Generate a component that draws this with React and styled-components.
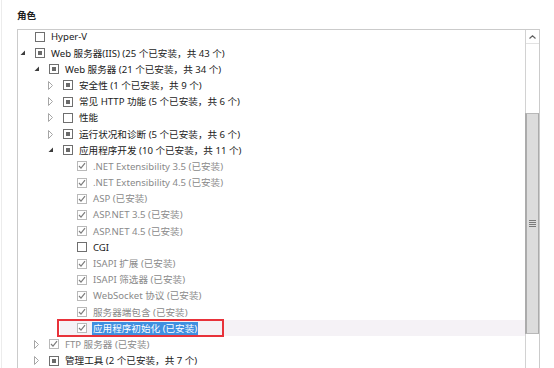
import React from "react";
import styled, { createGlobalStyle } from "styled-components";

const Global = createGlobalStyle`
  html, body { margin: 0; padding: 0; background: #fff; overflow: hidden; }
  body { font-family: "Noto Sans", "Noto Sans CJK SC", sans-serif; }
`;

const Page = styled.div`
  width: 554px;
  height: 368px;
  padding: 7px 0 0 17px;
  box-sizing: border-box;
  border-left: 1px solid #ececec;
  margin-left: 1px;
`;

const Heading = styled.div`
  font-family: "Noto Sans CJK SC", sans-serif;
  font-size: 9.6px;
  font-weight: 700;
  line-height: 16px;
  color: #1e1e1e;
  margin-left: -2px;
`;

const Box = styled.div`
  margin-top: 6px;
  margin-left: -2px;
  width: 523px;
  height: 345px;
  box-sizing: border-box;
  border: 1px solid #cbcbcb;
  display: flex;
`;

const Viewport = styled.div`
  flex: 1;
  overflow: hidden;
`;

const List = styled.div`
  margin-top: -1.2px;
  display: flex;
  flex-direction: column;
`;

const Row = styled.div`
  position: relative;
  height: 16.2px;
  display: flex;
  align-items: center;
  margin-left: ${(p) => p.$level * 14}px;
  background: ${(p) => (p.$selected ? "#f5f2f6" : "transparent")};
  font-size: 9.6px;
  line-height: 14px;
  white-space: nowrap;
  color: ${(p) => (p.$disabled ? "#8a8a8a" : "#1a1a1a")};
`;

const ArrowSlot = styled.div`
  width: 17px;
  height: 16px;
  display: flex;
  align-items: center;
  padding-left: 2px;
  box-sizing: border-box;
  flex: none;
`;

const CheckBox = styled.div`
  width: 10px;
  height: 10px;
  box-sizing: border-box;
  border: 1px solid ${(p) => (p.$disabled ? "#b9b9b9" : "#6f6f6f")};
  background: #fff;
  display: flex;
  align-items: center;
  justify-content: center;
  flex: none;
  margin-right: 6px;
`;

const Fill = styled.div`
  width: 4px;
  height: 4px;
  background: #6a6a6a;
`;

const Label = styled.span`
  padding: 0 1px;
  margin-left: -1px;
  background: ${(p) => (p.$highlight ? "#3f8fe0" : "transparent")};
  color: ${(p) => (p.$highlight ? "#fff" : "inherit")};
  line-height: 13px;
`;

const Annotation = styled.div`
  position: absolute;
  left: -3px;
  top: -1px;
  width: 167px;
  height: 18px;
  box-sizing: border-box;
  border: 2px solid #e8323a;
  pointer-events: none;
`;

const Scrollbar = styled.div`
  width: 13px;
  flex: none;
  border-left: 1px solid #d2d2d2;
  display: flex;
  flex-direction: column;
  background: #fff;
`;

const ScrollButton = styled.div`
  height: 13px;
  display: flex;
  align-items: center;
  justify-content: center;
  border-bottom: 1px solid #e2e2e2;
  flex: none;
`;

const Track = styled.div`
  flex: 1;
  display: flex;
  flex-direction: column;
  padding-top: 69px;
`;

const Thumb = styled.div`
  height: 221px;
  margin-left: -1px;
  box-sizing: border-box;
  background: #dcdcdc;
  border-left: 2px solid #ababab;
  border-right: 1px solid #ababab;
  border-top: 1px solid #b8b8b8;
  border-bottom: 1px solid #b8b8b8;
  display: flex;
  align-items: center;
  justify-content: center;
`;

const Grip = styled.div`
  width: 7px;
  height: 7px;
  background: repeating-linear-gradient(
    to bottom,
    #7a7a7a 0px,
    #7a7a7a 1px,
    transparent 1px,
    transparent 2px
  );
`;

const Expanded = () => (
  <svg width="6" height="6" viewBox="0 0 6 6">
    <polygon points="5,0.5 5,5 0.5,5" fill="#3c3c3c" />
  </svg>
);

const Collapsed = () => (
  <svg width="6" height="9" viewBox="0 0 6 9">
    <polygon points="0.5,0.5 4.5,4.5 0.5,8.5" fill="none" stroke="#a6a6a6" strokeWidth="1" />
  </svg>
);

const Check = () => (
  <svg width="8" height="8" viewBox="0 0 8 8">
    <polyline points="1,4 3,6.2 7,1.2" fill="none" stroke="#7c7c7c" strokeWidth="1.2" />
  </svg>
);

const rows = [
  { level: 0, cb: "empty", text: "Hyper-V" },
  { level: 0, arrow: "open", cb: "partial", text: "Web 服务器(IIS) (25 个已安装，共 43 个)" },
  { level: 1, arrow: "open", cb: "partial", text: "Web 服务器 (21 个已安装，共 34 个)" },
  { level: 2, arrow: "closed", cb: "partial", text: "安全性 (1 个已安装，共 9 个)" },
  { level: 2, arrow: "closed", cb: "partial", text: "常见 HTTP 功能 (5 个已安装，共 6 个)" },
  { level: 2, arrow: "closed", cb: "empty", text: "性能" },
  { level: 2, arrow: "closed", cb: "partial", text: "运行状况和诊断 (5 个已安装，共 6 个)" },
  { level: 2, arrow: "open", cb: "partial", text: "应用程序开发 (10 个已安装，共 11 个)" },
  { level: 3, cb: "done", text: ".NET Extensibility 3.5 (已安装)" },
  { level: 3, cb: "done", text: ".NET Extensibility 4.5 (已安装)" },
  { level: 3, cb: "done", text: "ASP (已安装)" },
  { level: 3, cb: "done", text: "ASP.NET 3.5 (已安装)" },
  { level: 3, cb: "done", text: "ASP.NET 4.5 (已安装)" },
  { level: 3, cb: "empty", text: "CGI" },
  { level: 3, cb: "done", text: "ISAPI 扩展 (已安装)" },
  { level: 3, cb: "done", text: "ISAPI 筛选器 (已安装)" },
  { level: 3, cb: "done", text: "WebSocket 协议 (已安装)" },
  { level: 3, cb: "done", text: "服务器端包含 (已安装)" },
  { level: 3, cb: "done", text: "应用程序初始化 (已安装)", selected: true },
  { level: 1, arrow: "closed", cb: "done", text: "FTP 服务器 (已安装)" },
  { level: 1, arrow: "closed", cb: "partial", text: "管理工具 (2 个已安装，共 7 个)" },
];

export default function App() {
  return (
    <>
      <Global />
      <Page>
        <Heading>角色</Heading>
        <Box>
          <Viewport>
            <List>
              {rows.map((r, i) => {
                const disabled = r.cb === "done";
                return (
                  <Row key={i} $level={r.level} $disabled={disabled} $selected={r.selected}>
                    <ArrowSlot>
                      {r.arrow === "open" && <Expanded />}
                      {r.arrow === "closed" && <Collapsed />}
                    </ArrowSlot>
                    <CheckBox $disabled={disabled}>
                      {r.cb === "partial" && <Fill />}
                      {r.cb === "done" && <Check />}
                    </CheckBox>
                    <Label $highlight={r.selected}>{r.text}</Label>
                    {r.selected && <Annotation />}
                  </Row>
                );
              })}
            </List>
          </Viewport>
          <Scrollbar>
            <ScrollButton>
              <svg width="7" height="4" viewBox="0 0 7 4">
                <polyline points="0.5,3.5 3.5,0.8 6.5,3.5" fill="none" stroke="#606060" strokeWidth="1.2" />
              </svg>
            </ScrollButton>
            <Track>
              <Thumb>
                <Grip />
              </Thumb>
            </Track>
          </Scrollbar>
        </Box>
      </Page>
    </>
  );
}
